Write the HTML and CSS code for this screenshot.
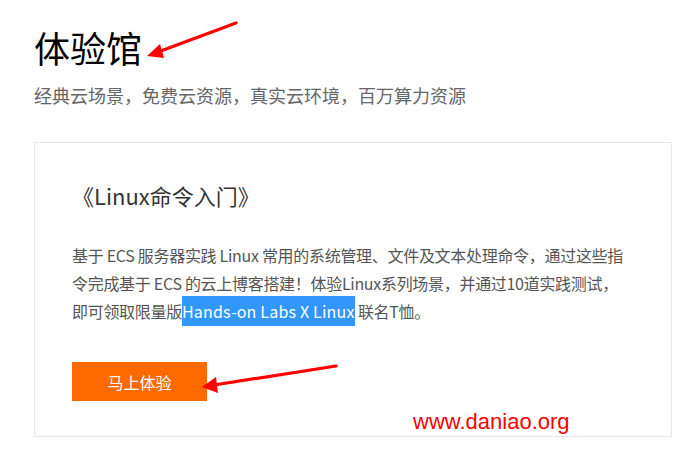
FILE: index.html
```html
<!DOCTYPE html>
<html lang="zh-CN">
<head>
<meta charset="utf-8">
<title>体验馆</title>
<link rel="stylesheet" href="styles.css">
</head>
<body>
<div class="page">
  <h1 class="title">体验馆</h1>
  <p class="subtitle">经典云场景，免费云资源，真实云环境，百万算力资源</p>
  <div class="card">
    <h2 class="card-title">《Linux命令入门》</h2>
    <p class="card-text">基于 ECS 服务器实践 Linux 常用的系统管理、文件及文本处理命令，通过这些指令完成基于 ECS 的云上博客搭建！体验Linux系列场景，并通过10道实践测试，<br>即可领取限量版<span class="hl">Hands-on Labs X Linux</span> 联名T恤。</p>
    <a class="btn">马上体验</a>
  </div>
  <svg class="annot" width="699" height="472" viewBox="0 0 699 472">
    <line x1="236" y1="23" x2="158" y2="52" stroke="#ff0000" stroke-width="3.2" stroke-linecap="round"/>
    <polygon points="147,56 160,44 164,58" fill="#ff0000"/>
    <line x1="336" y1="366" x2="214" y2="385" stroke="#ff0000" stroke-width="3.2" stroke-linecap="round"/>
    <polygon points="202,387 216,377 218,393" fill="#ff0000"/>
  </svg>
  <div class="watermark">www.daniao.org</div>
</div>
</body>
</html>
```
FILE: styles.css
```css
html, body {
  margin: 0;
  padding: 0;
  background: #ffffff;
}
body {
  font-family: "Noto Sans CJK SC", "Noto Sans", sans-serif;
}
.page {
  position: relative;
  width: 699px;
  height: 472px;
  box-sizing: border-box;
  padding: 25px 27px 0 34px;
}
.title {
  margin: 0;
  font-size: 36px;
  line-height: 44px;
  font-weight: normal;
  color: #000;
}
.subtitle {
  margin: 13px 0 0;
  font-size: 18px;
  line-height: 26px;
  color: #666;
}
.card {
  margin-top: 34px;
  width: 638px;
  box-sizing: border-box;
  border: 1px solid #e8e8e8;
  padding: 36px 36px 35px 37px;
}
.card-title {
  margin: 0;
  font-size: 22px;
  line-height: 32px;
  font-weight: normal;
  color: #333;
}
.card-text {
  margin: 30px 0 0;
  font-size: 16px;
  line-height: 28px;
  color: #555;
  letter-spacing: -0.3px;
}
.hl {
  background: #3297fd;
  color: #fff;
  padding: 3px 0;
  letter-spacing: 0.2px;
}
.btn {
  display: flex;
  align-items: center;
  justify-content: center;
  margin-top: 37px;
  width: 135px;
  height: 39px;
  background: #ff6a00;
  color: #fff;
  font-size: 16px;
}
.annot {
  position: absolute;
  left: 0;
  top: 0;
  pointer-events: none;
}
.watermark {
  position: absolute;
  left: 413px;
  top: 409px;
  font-family: "Liberation Sans", Arial, sans-serif;
  font-size: 22px;
  line-height: 26px;
  color: #ff0000;
}
```
